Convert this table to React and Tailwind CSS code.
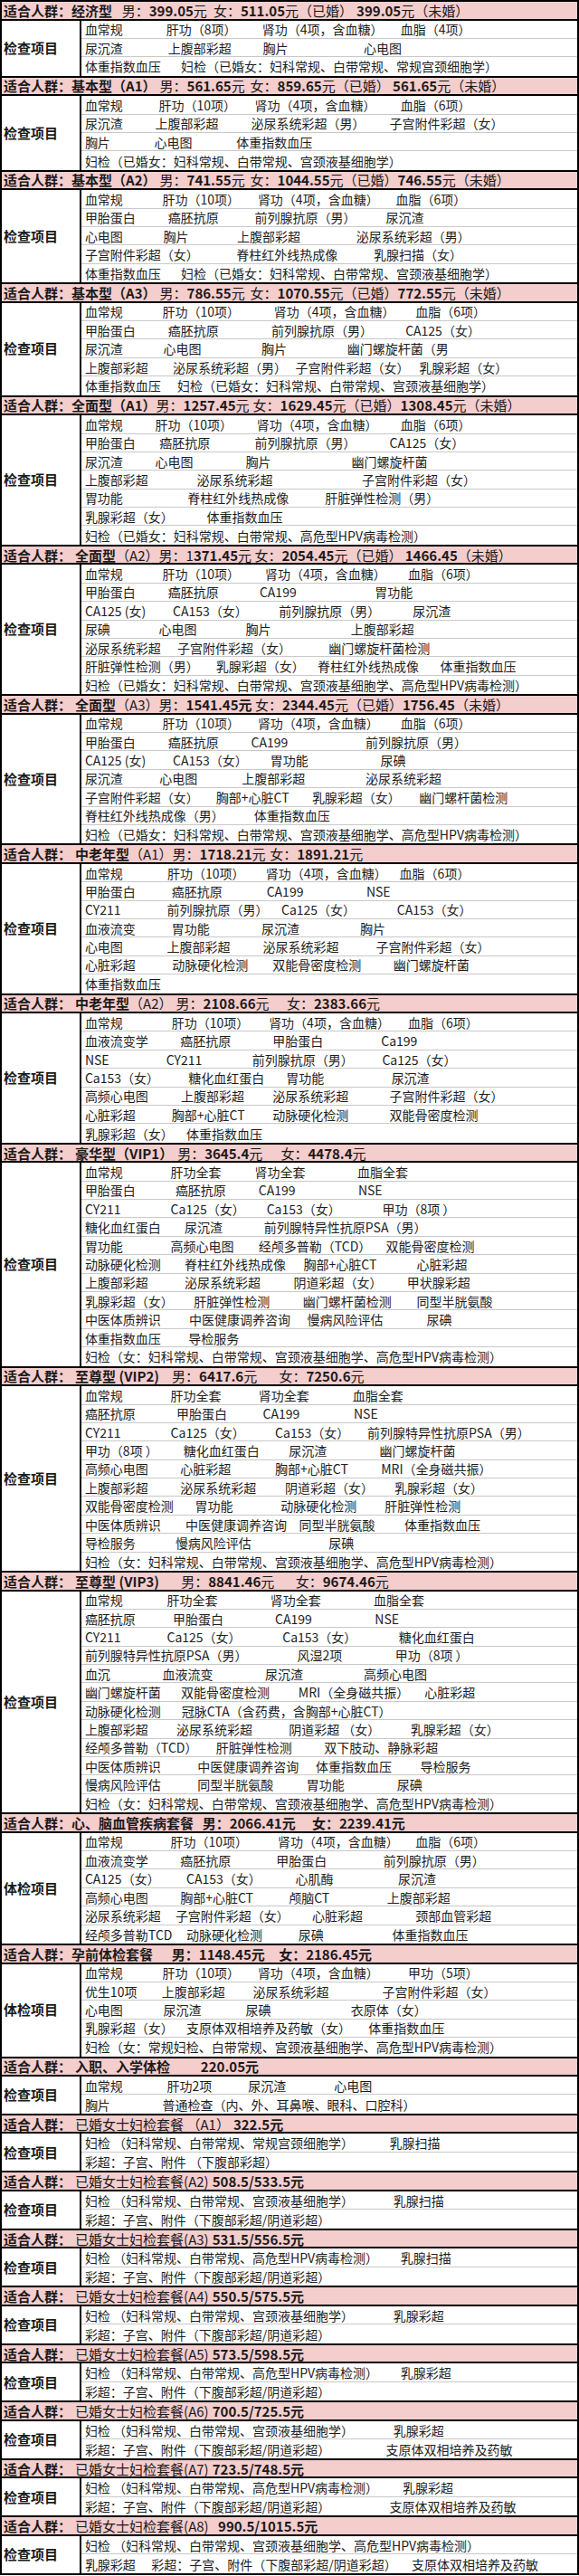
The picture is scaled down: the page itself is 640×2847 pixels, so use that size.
import React from "react";

const Z = 640 / 1568;

const S = (h, rows, opts = {}) => ({ h, rows, label: opts.label || "检查项目", f: !!opts.f });
const T = (z, s) => [z, s];
const AD = "**适合人群：**";

const sections = [
  S([T(10, "**适合人群：经济型**"), T(330, "男：**399.05**元"), T(578, "女：**511.05**元（已婚）"), T(960, "**399.05**元（未婚）")], [
    "230 血常规|450 肝功（8项）|710 肾功（4项，含血糖）|1085 血脂（4项）",
    "230 尿沉渣|455 上腹部彩超|712 胸片|985 心电图",
    "230 体重指数血压|490 妇检（已婚女：妇科常规、白带常规、常规宫颈细胞学）",
  ]),
  S([T(10, "**适合人群：基本型（A1）**"), T(405, "男：**561.65**元"), T(650, "女：**859.65**元（已婚） **561.65**元（未婚）")], [
    "230 血常规|430 肝功（10项）|690 肾功（4项，含血糖）|1085 血脂（6项）",
    "230 尿沉渣|420 上腹部彩超|680 泌尿系统彩超（男）|1055 子宫附件彩超（女）",
    "230 胸片|418 心电图|640 体重指数血压",
    "230 妇检（已婚女：妇科常规、白带常规、宫颈液基细胞学）",
  ]),
  S([T(10, "**适合人群：基本型（A2）**"), T(405, "男：**741.55**元"), T(650, "女：**1044.55**元（已婚）**746.55**元（未婚）")], [
    "230 血常规|440 肝功（10项）|698 肾功（4项，含血糖）|1072 血脂（6项）",
    "230 甲胎蛋白|455 癌胚抗原|690 前列腺抗原（男）|1045 尿沉渣",
    "230 心电图|442 胸片|642 上腹部彩超|965 泌尿系统彩超（男）",
    "230 子宫附件彩超（女）|640 脊柱红外线热成像|1012 乳腺扫描（女）",
    "230 体重指数血压|490 妇检（已婚女：妇科常规、白带常规、宫颈液基细胞学）",
  ]),
  S([T(10, "**适合人群：基本型（A3）**"), T(405, "男：**786.55**元"), T(650, "女：**1070.55**元（已婚）**772.55**元（未婚）")], [
    "230 血常规|440 肝功（10项）|742 肾功（4项，含血糖）|1125 血脂（6项）",
    "230 甲胎蛋白|455 癌胚抗原|735 前列腺抗原（男）|1098 CA125（女）",
    "230 尿沉渣|442 心电图|708 胸片|940 幽门螺旋杆菌（男",
    "230 上腹部彩超|468 泌尿系统彩超（男）|800 子宫附件彩超（女）|1135 乳腺彩超（女）",
    "230 体重指数血压|480 妇检（已婚女：妇科常规、白带常规、宫颈液基细胞学）",
  ]),
  S([T(10, "**适合人群：全面型（A1）**男：**1257.45**元"), T(650, "女：**1629.45**元（已婚）**1308.45**元（未婚）")], [
    "230 血常规|420 肝功（10项）|695 肾功（4项，含血糖）|1085 血脂（6项）",
    "230 甲胎蛋白|432 癌胚抗原|690 前列腺抗原（男）|1055 CA125（女）",
    "230 尿沉渣|420 心电图|665 胸片|952 幽门螺旋杆菌",
    "230 上腹部彩超|533 泌尿系统彩超|980 子宫附件彩超（女）",
    "230 胃功能|508 脊柱红外线热成像|880 肝脏弹性检测（男）",
    "230 乳腺彩超（女）|560 体重指数血压",
    "230 妇检（已婚女：妇科常规、白带常规、高危型HPV病毒检测）",
  ]),
  S([T(10, AD), T(188, "**全面型**（A2）男：1**371.45**元 女：**2054.45**元（已婚） **1466.45**（未婚）")], [
    "230 血常规|440 肝功（10项）|718 肾功（4项，含血糖）|1105 血脂（6项）",
    "230 甲胎蛋白|455 癌胚抗原|703 CA199|1015 胃功能",
    "230 CA125 (女)|468 CA153（女）|755 前列腺抗原（男）|1118 尿沉渣",
    "230 尿碘|430 心电图|665 胸片|950 上腹部彩超",
    "230 泌尿系统彩超|480 子宫附件彩超（女）|890 幽门螺旋杆菌检测",
    "230 肝脏弹性检测（男）|585 乳腺彩超（女）|860 脊柱红外线热成像|1192 体重指数血压",
    "230 妇检（已婚女：妇科常规、白带常规、宫颈液基细胞学、高危型HPV病毒检测）",
  ]),
  S([T(10, AD), T(188, "**全面型**（A3）男：**1541.45元** 女：**2344.45**元（已婚）**1756.45**（未婚）")], [
    "230 血常规|440 肝功（10项）|698 肾功（4项，含血糖）|1085 血脂（6项）",
    "230 甲胎蛋白|455 癌胚抗原|680 CA199|990 前列腺抗原（男）",
    "230 CA125 (女)|468 CA153（女）|732 胃功能|1030 尿碘",
    "230 尿沉渣|432 心电图|655 上腹部彩超|990 泌尿系统彩超",
    "230 子宫附件彩超（女）|585 胸部+心脏CT|845 乳腺彩超（女）|1135 幽门螺杆菌检测",
    "230 脊柱红外线热成像（男）|688 体重指数血压",
    "230 妇检（已婚女：妇科常规、白带常规、宫颈液基细胞学、高危型HPV病毒检测）",
  ]),
  S([T(10, AD), T(178, "**中老年型**（A1）男：**1718.21**元"), T(705, "女：**1891.21**元")], [
    "230 血常规|453 肝功（10项）|720 肾功（4项，含血糖）|1082 血脂（6项）",
    "230 甲胎蛋白|465 癌胚抗原|722 CA199|992 NSE",
    "230 CY211|452 前列腺抗原（男）|762 Ca125（女）|1075 CA153（女）",
    "230 血液流变|465 胃功能|708 尿沉渣|975 胸片",
    "230 心电图|452 上腹部彩超|712 泌尿系统彩超|1018 子宫附件彩超（女）",
    "230 心脏彩超|466 动脉硬化检测|738 双能骨密度检测|1065 幽门螺旋杆菌",
    "230 体重指数血压",
  ]),
  S([T(10, AD), T(178, "**中老年型**（A2）"), T(440, "男：**2108.66**元"), T(740, "女：**2383.66**元")], [
    "230 血常规|465 肝功（10项）|728 肾功（4项，含血糖）|1105 血脂（6项）",
    "230 血液流变学|488 癌胚抗原|738 甲胎蛋白|1032 Ca199",
    "230 NSE|450 CY211|683 前列腺抗原（男）|1035 Ca125（女）",
    "230 Ca153（女）|510 糖化血红蛋白|775 胃功能|1060 尿沉渣",
    "230 高频心电图|490 上腹部彩超|738 泌尿系统彩超|1055 子宫附件彩超（女）",
    "230 心脏彩超|465 胸部+心脏CT|738 动脉硬化检测|1055 双能骨密度检测",
    "230 乳腺彩超（女）|505 体重指数血压",
  ]),
  S([T(10, AD), T(178, "**豪华型（VIP1）**"), T(455, "男：**3645.4**元"), T(735, "女：**4478.4**元")], [
    "230 血常规|462 肝功全套|690 肾功全套|968 血脂全套",
    "230 甲胎蛋白|475 癌胚抗原|700 CA199|970 NSE",
    "230 CY211|462 Ca125（女）|722 Ca153（女）|1035 甲功（8项 ）",
    "230 糖化血红蛋白|500 尿沉渣|715 前列腺特异性抗原PSA（男）",
    "230 胃功能|462 高频心电图|700 经颅多普勒（TCD）|1045 双能骨密度检测",
    "230 动脉硬化检测|500 脊柱红外线热成像|822 胸部+心脏CT|1128 心脏彩超",
    "230 上腹部彩超|500 泌尿系统彩超|795 阴道彩超（女）|1102 甲状腺彩超",
    "230 乳腺彩超（女）|525 肝脏弹性检测|820 幽门螺杆菌检测|1128 同型半胱氨酸",
    "230 中医体质辨识|512 中医健康调养咨询|832 慢病风险评估|1155 尿碘",
    "230 体重指数血压|510 导检服务",
    "230 妇检（女：妇科常规、白带常规、宫颈液基细胞学、高危型HPV病毒检测）",
  ]),
  S([T(10, AD), T(178, "**至尊型 (VIP2)**"), T(440, "男：**6417.6**元"), T(730, "女：**7250.6**元")], [
    "230 血常规|462 肝功全套|700 肾功全套|955 血脂全套",
    "230 癌胚抗原|478 甲胎蛋白|712 CA199|958 NSE",
    "230 CY211|462 Ca125（女）|745 Ca153（女）|995 前列腺特异性抗原PSA（男）",
    "230 甲功（8项 ）|497 糖化血红蛋白|782 尿沉渣|1028 幽门螺旋杆菌",
    "230 高频心电图|488 心脏彩超|745 胸部+心脏CT|1032 MRI（全身磁共振）",
    "230 上腹部彩超|488 泌尿系统彩超|772 阴道彩超（女）|1068 乳腺彩超（女）",
    "230 双能骨密度检测|528 胃功能|760 动脉硬化检测|1042 肝脏弹性检测",
    "230 中医体质辨识|502 中医健康调养咨询|810 同型半胱氨酸|1095 体重指数血压",
    "230 导检服务|475 慢病风险评估|890 尿碘",
    "230 妇检（女：妇科常规、白带常规、宫颈液基细胞学、高危型HPV病毒检测）",
  ]),
  S([T(10, AD), T(178, "**至尊型 (VIP3)**"), T(465, "男：**8841.46**元"), T(775, "女：**9674.46**元")], [
    "230 血常规|452 肝功全套|732 肾功全套|1012 血脂全套",
    "230 癌胚抗原|468 甲胎蛋白|745 CA199|1015 NSE",
    "230 CY211|452 Ca125（女）|765 Ca153（女）|1080 糖化血红蛋白",
    "230 前列腺特异性抗原PSA（男）|805 风湿2项|1070 甲功（8项 ）",
    "230 血沉|440 血液流变|718 尿沉渣|985 高频心电图",
    "230 幽门螺旋杆菌|490 双能骨密度检测|808 MRI（全身磁共振）|1150 心脏彩超",
    "230 动脉硬化检测|492 冠脉CTA（含药费，含胸部+心脏CT）",
    "230 上腹部彩超|478 泌尿系统彩超|782 阴道彩超 （女）|1112 乳腺彩超（女）",
    "230 经颅多普勒（TCD）|585 肝脏弹性检测|878 双下肢动、静脉彩超",
    "230 中医体质辨识|535 中医健康调养咨询|855 体重指数血压|1138 导检服务",
    "230 慢病风险评估|535 同型半胱氨酸|830 胃功能|1075 尿碘",
    "230 妇检（女：妇科常规、白带常规、宫颈液基细胞学、高危型HPV病毒检测）",
  ]),
  S([T(10, "**适合人群：心、脑血管疾病套餐**"), T(548, "**男：2066.41元**"), T(845, "**女：2239.41元**")], [
    "230 血常规|462 肝功（10项）|752 肾功（4项，含血糖）|1125 血脂（6项）",
    "230 血液流变学|488 癌胚抗原|748 甲胎蛋白|1038 前列腺抗原（男）",
    "230 CA125（女）|505 CA153（女）|800 心肌酶|1078 尿沉渣",
    "230 高频心电图|488 胸部+心脏CT|782 颅脑CT|1048 上腹部彩超",
    "230 泌尿系统彩超|475 子宫附件彩超（女）|845 心脏彩超|1125 颈部血管彩超",
    "230 经颅多普勒TCD|505 动脉硬化检测|808 尿碘|1062 体重指数血压",
  ], { label: "体检项目" }),
  S([T(10, "**适合人群：孕前体检套餐**"), T(465, "**男：1148.45元**"), T(755, "**女：2186.45元**")], [
    "230 血常规|440 肝功（10项）|698 肾功（4项，含血糖）|1105 甲功（5项）",
    "230 优生10项|438 上腹部彩超|685 泌尿系统彩超|1035 子宫附件彩超（女）",
    "230 心电图|442 尿沉渣|665 尿碘|950 衣原体（女）",
    "230 乳腺彩超（女）|505 支原体双相培养及药敏（女）|998 体重指数血压",
    "230 妇检（女：常规妇检、白带常规、宫颈液基细胞学、高危型HPV病毒检测）",
  ], { label: "体检项目" }),
  S([T(10, AD), T(190, "**入职、入学体检**"), T(530, "**220.05元**")], [
    "230 血常规|452 肝功2项|672 尿沉渣|905 心电图",
    "230 胸片|440 普通检查（内、外、耳鼻喉、眼科、口腔科）",
  ]),
];

const FJ1 = "（妇科常规、白带常规、宫颈液基细胞学）";
const FJ2 = "（妇科常规、白带常规、高危型HPV病毒检测）";
const CS = "230 彩超：子宫、附件（下腹部彩超/阴道彩超）";
const fj = [
  ["已婚女士妇检套餐 （A1）", 590, "322.5元", ["230 妇检 （妇科常规、白带常规、常规宫颈细胞学）|1055 乳腺扫描", "230 彩超：子宫、附件 （下腹部彩超）"]],
  ["已婚女士妇检套餐(A2)", 545, "508.5/533.5元", [`230 妇检 ${FJ1}|1065 乳腺扫描`, CS]],
  ["已婚女士妇检套餐(A3)", 545, "531.5/556.5元", [`230 妇检 ${FJ2}|1085 乳腺扫描`, CS]],
  ["已婚女士妇检套餐(A4)", 545, "550.5/575.5元", [`230 妇检 ${FJ1}|1065 乳腺彩超`, CS]],
  ["已婚女士妇检套餐(A5)", 545, "573.5/598.5元", [`230 妇检 ${FJ2}|1085 乳腺彩超`, CS]],
  ["已婚女士妇检套餐(A6)", 545, "700.5/725.5元", [`230 妇检 ${FJ1}|1065 乳腺彩超`, `${CS}|1045 支原体双相培养及药敏`]],
  ["已婚女士妇检套餐(A7)", 545, "723.5/748.5元", [`230 妇检 ${FJ2}|1090 乳腺彩超`, `${CS}|1055 支原体双相培养及药敏`]],
  ["已婚女士妇检套餐(A8)", 565, "990.5/1015.5元", ["230 妇检 （妇科常规、白带常规、宫颈液基细胞学、高危型HPV病毒检测）", "230 乳腺彩超|410 彩超：子宫、附件（下腹部彩超/阴道彩超）|1115 支原体双相培养及药敏"]],
];
fj.forEach(([name, pz, price, rows]) => {
  sections.push(S([T(10, AD), T(178, name), T(pz, `**${price}**`)], rows, { f: true }));
});

function Runs({ s }) {
  return s.split("**").map((p, i) =>
    p ? (
      <span key={i} className={i % 2 ? "font-bold" : "font-normal"}>
        {p}
      </span>
    ) : null
  );
}

function Positioned({ items, origin }) {
  const lead = items[0][0] * Z - origin;
  return (
    <>
      <span className="shrink-0" style={{ width: lead }} />
      {items.map(([z, s], i) => {
        const next = items[i + 1];
        const w = next ? (next[0] - z) * Z : undefined;
        return (
          <span key={i} className="shrink-0 whitespace-pre pr-[4px]" style={w ? { minWidth: w } : undefined}>
            <Runs s={s} />
          </span>
        );
      })}
    </>
  );
}

function parseRow(r) {
  return r.split("|").map((p) => {
    const k = p.indexOf(" ");
    return [Number(p.slice(0, k)), p.slice(k + 1)];
  });
}

function Section({ sec }) {
  return (
    <div>
      <div className="flex h-[22.5px] items-center overflow-hidden border-y-2 border-black bg-[#f4cdcd] text-[15px] leading-none text-[#1a1a1a]">
        <Positioned items={sec.h} origin={2} />
      </div>
      <div className="flex">
        <div className="flex w-[88px] shrink-0 items-center border-r-2 border-black pl-[2px] text-[15px] font-bold text-[#1a1a1a]">
          {sec.label}
        </div>
        <div className="flex flex-1 flex-col">
          {sec.rows.map((r, i) => {
            const last = i === sec.rows.length - 1;
            const hc = sec.f ? "h-[20.5px]" : "h-[20.4px]";
            return (
              <div
                key={i}
                className={`flex items-center overflow-hidden text-[14px] leading-none text-[#1c1c1c] ${hc} ${
                  last ? "" : "border-b border-[#c9c9c9]"
                }`}
              >
                <Positioned items={parseRow(r)} origin={90} />
              </div>
            );
          })}
        </div>
      </div>
    </div>
  );
}

export default function App() {
  return (
    <div className="w-[640px] border-x-2 border-b-2 border-black bg-white font-['Noto_Sans_CJK_SC','Noto_Sans',sans-serif]">
      {sections.map((sec, i) => (
        <Section key={i} sec={sec} />
      ))}
    </div>
  );
}
